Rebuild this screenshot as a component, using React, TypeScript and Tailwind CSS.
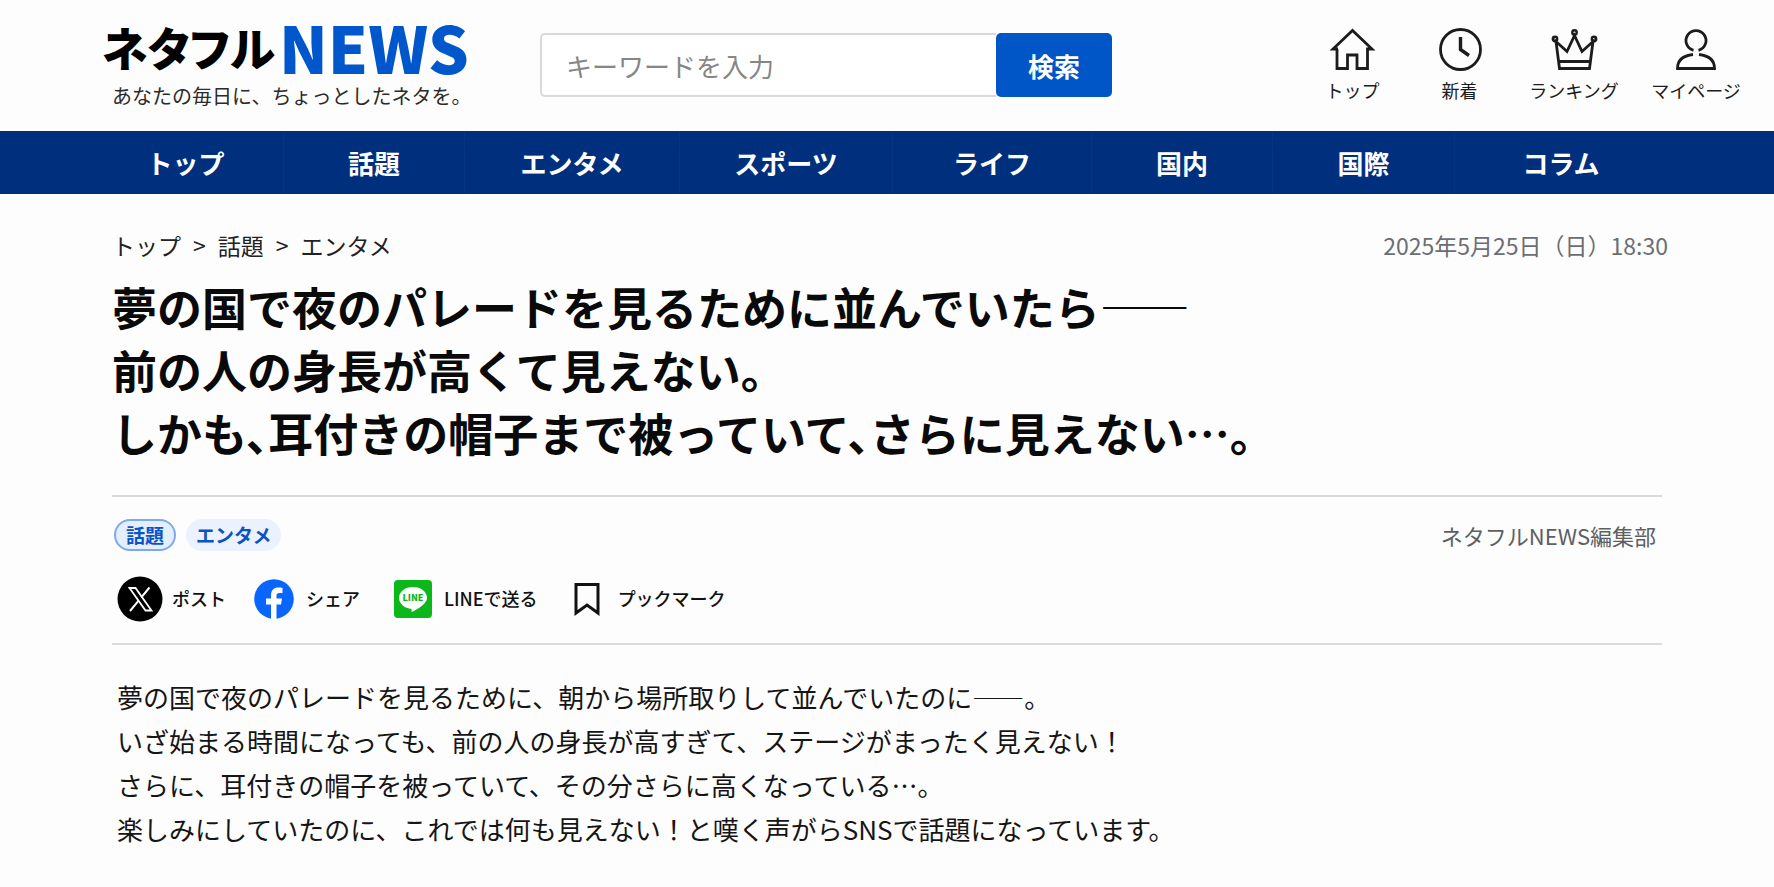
import type { ReactNode } from 'react'

interface QuickLink {
  label: string
  icon: ReactNode
}

const CATEGORIES = ['トップ', '話題', 'エンタメ', 'スポーツ', 'ライフ', '国内', '国際', 'コラム']

const BODY_LINES = [
  '夢の国で夜のパレードを見るために、朝から場所取りして並んでいたのに――。',
  'いざ始まる時間になっても、前の人の身長が高すぎて、ステージがまったく見えない！',
  'さらに、耳付きの帽子を被っていて、その分さらに高くなっている…。',
  '楽しみにしていたのに、これでは何も見えない！と嘆く声がらSNSで話題になっています。',
]

const iconProps = {
  viewBox: '0 0 48 48',
  className: 'size-12',
  fill: 'none',
  stroke: 'currentColor',
  strokeWidth: 2.8,
  'aria-hidden': true,
}

function HomeIcon() {
  return (
    <svg {...iconProps}>
      <path d="M8 23V42.5H18.5V29H28V42.5H38.5V23H43L23.500 4.500L4 23H9" />
    </svg>
  )
}

function ClockIcon() {
  return (
    <svg {...iconProps}>
      <circle cx="24.500" cy="23.500" r="20" />
      <path d="M24.5 11V23.5L33 29.5" strokeWidth={3.4} />
    </svg>
  )
}

function CrownIcon() {
  return (
    <svg {...iconProps}>
      <path d="M9.5 42.5L6 15.5L17 25.500L24.500 9.500L32 25.500L43 15.500L39.500 42.500ZM8.500 35.500H40.500" />
      <circle cx="5" cy="13" r="2.200" strokeWidth={2.4} />
      <circle cx="24.500" cy="6.500" r="2.200" strokeWidth={2.4} />
      <circle cx="44" cy="13" r="2.200" strokeWidth={2.4} />
    </svg>
  )
}

function UserIcon() {
  return (
    <svg {...iconProps}>
      <path d="M21.500 24.300A10 10 0 1 1 26.500 24.300" />
      <path d="M21 28.500C12 29.500 5.500 33.500 5.500 42.500H42.500C42.500 33.500 36 29.500 27 28.500" />
    </svg>
  )
}

const QUICK_LINKS: QuickLink[] = [
  { label: 'トップ', icon: <HomeIcon /> },
  { label: '新着', icon: <ClockIcon /> },
  { label: 'ランキング', icon: <CrownIcon /> },
  { label: 'マイページ', icon: <UserIcon /> },
]

function Header() {
  return (
    <header className="flex h-[131px] items-start pl-[102px] pr-[17px]">
      <a href="#" className="w-[438px] pt-3.5">
        <span className="flex h-16 items-center">
          <span className="text-[46px] font-black leading-16 text-black [font-feature-settings:'palt']">ネタフル</span>
          <span className="ml-1 text-[64px] font-black leading-16 text-[#0057cc]">NEWS</span>
        </span>
        <span className="mt-0.5 block pl-2.5 text-[20px] leading-8 text-[#2b2b2b]">
          あなたの毎日に、ちょっとしたネタを。
        </span>
      </a>
      <form className="mt-[33px] flex h-16 w-[572px]" onSubmit={(e) => e.preventDefault()}>
        <input
          type="search"
          aria-label="キーワードを入力"
          placeholder="キーワードを入力"
          className="min-w-0 flex-1 rounded-l-[5px] border-2 border-r-0 border-[#d9d9d9] bg-white px-6 text-[26px] outline-none placeholder:text-[#868686]"
        />
        <button type="submit" className="w-[116px] rounded-[5px] bg-[#0056c7] text-[26px] font-bold text-white">
          検索
        </button>
      </form>
      <nav className="ml-auto grid grid-cols-[107px_107px_122px_122px] pt-[26px]">
        {QUICK_LINKS.map(({ label, icon }) => (
          <a key={label} href="#" className="flex flex-col items-center text-[18px] leading-8 text-[#1c1c1c]">
            {icon}
            {label}
          </a>
        ))}
      </nav>
    </header>
  )
}

function CategoryNav() {
  return (
    <nav className="bg-[#00307d] pl-[88px] pr-[107px]">
      {/* Columns follow the label lengths */}
      <ul className="grid h-[63px] grid-cols-[196fr_181fr_215fr_213fr_199fr_181fr_182fr_212fr]">
        {CATEGORIES.map((category) => (
          <li key={category} className="border-r border-[#043580] last:border-r-0">
            <a href="#" className="flex h-full items-center justify-center text-[26px] font-bold text-white">
              {category}
            </a>
          </li>
        ))}
      </ul>
    </nav>
  )
}

function Breadcrumb() {
  return (
    <nav className="flex items-center gap-3 text-[23px] text-[#222]">
      <a href="#">トップ</a>
      <span>&gt;</span>
      <a href="#">話題</a>
      <span>&gt;</span>
      <a href="#">エンタメ</a>
    </nav>
  )
}

function XLogo() {
  return (
    <svg viewBox="0 0 46 46" className="size-[46px]" aria-hidden>
      <circle cx="23" cy="23" r="22.500" fill="#000" />
      <g fill="none" stroke="#fff">
        <path d="M12.500 12H18.500L34.500 34.500H28.500Z" strokeWidth={1.8} />
        <path d="M32.500 11.500L24.300 21.300M21.600 24.600L13 35" strokeWidth={2} />
      </g>
    </svg>
  )
}

function FacebookLogo() {
  return (
    <svg viewBox="0 0 40 40" className="size-10" aria-hidden>
      <circle cx="20" cy="20" r="19.800" fill="#0866ff" />
      <path
        fill="#fff"
        d="M17 40V25.500H12V19.500H17V16.500C17 11 20 8.500 24.500 8.500C26 8.500 27.500 8.700 28.500 8.900V14H25.500C23.200 14 22.500 15.200 22.500 17V19.500H28L27 25.500H22.500V40Z"
      />
    </svg>
  )
}

function LineLogo() {
  return (
    <svg viewBox="0 0 38 38" className="size-[38px]" aria-hidden>
      <rect width="38" height="38" rx="4" fill="#0cb719" />
      <path
        fill="#fff"
        d="M19 7C11 7 5 11.800 5 18C5 23.500 10 27.800 16.500 28.800C18.300 29.100 17.600 30.500 17.500 32C20.500 31 33 24.500 33 18C33 11.800 27 7 19 7Z"
      />
      <text x="19" y="21" textAnchor="middle" fontSize="9" fontWeight="900" fill="#0cb719">
        LINE
      </text>
    </svg>
  )
}

function BookmarkIcon() {
  return (
    <svg viewBox="0 0 26 34" className="h-[34px] w-[26px]" fill="none" stroke="#111" strokeWidth={3} aria-hidden>
      <path d="M2 2.500H24V31L13 23L2 31Z" />
    </svg>
  )
}

function ShareBar() {
  return (
    <div className="flex h-[46px] items-center pl-[5px] text-[18px] font-medium text-[#111]">
      <button type="button" className="flex items-center gap-[9px]">
        <XLogo />
        ポスト
      </button>
      <button type="button" className="ml-7 flex items-center gap-3">
        <FacebookLogo />
        シェア
      </button>
      <button type="button" className="ml-[34px] flex items-center gap-3">
        <LineLogo />
        LINEで送る
      </button>
      <button type="button" className="ml-9 flex items-center gap-[18px]">
        <BookmarkIcon />
        プックマーク
      </button>
    </div>
  )
}

export default function App() {
  return (
    <div lang="ja" className="min-h-screen bg-[#fdfdfd] font-['Noto_Sans_CJK_JP',sans-serif]">
      <Header />
      <CategoryNav />
      <main className="pl-28 pr-[106px]">
        <div className="flex items-center justify-between pt-[34px]">
          <Breadcrumb />
          <time dateTime="2025-05-25T18:30" className="text-[23px] text-[#6b6e72]">
            2025年5月25日（日）18:30
          </time>
        </div>

        <article className="pr-1.5">
          <h1 className="mt-3 text-[45px] font-bold leading-[63px] text-[#0a0a0a] [font-feature-settings:'halt']">
            夢の国で夜のパレードを見るために並んでいたら――
            <br />
            前の人の身長が高くて見えない。
            <br />
            しかも、耳付きの帽子まで被っていて、さらに見えない…。
          </h1>

          <div className="mt-[31px] border-y-2 border-[#dadcdc] pb-[21px] pt-[22px]">
            <div className="flex items-center justify-between pl-0.5 pr-1.5">
              <div className="flex gap-2.5 text-[19px] font-bold text-[#0b53c4]">
                <a href="#" className="flex h-8 items-center rounded-full border-2 border-[#7fa9ee] bg-[#e3effe] px-2.5">
                  話題
                </a>
                <a href="#" className="flex h-8 items-center rounded-full bg-[#ebf2fd] px-2.5">
                  エンタメ
                </a>
              </div>
              <span className="text-[22px] text-[#5c5f63]">ネタフルNEWS編集部</span>
            </div>
            <div className="mt-6">
              <ShareBar />
            </div>
          </div>

          <div className="pl-[5px] pt-[30px] text-[26px] leading-11 text-[#151515]">
            {BODY_LINES.map((line) => (
              <p key={line}>{line}</p>
            ))}
          </div>
        </article>
      </main>
    </div>
  )
}
